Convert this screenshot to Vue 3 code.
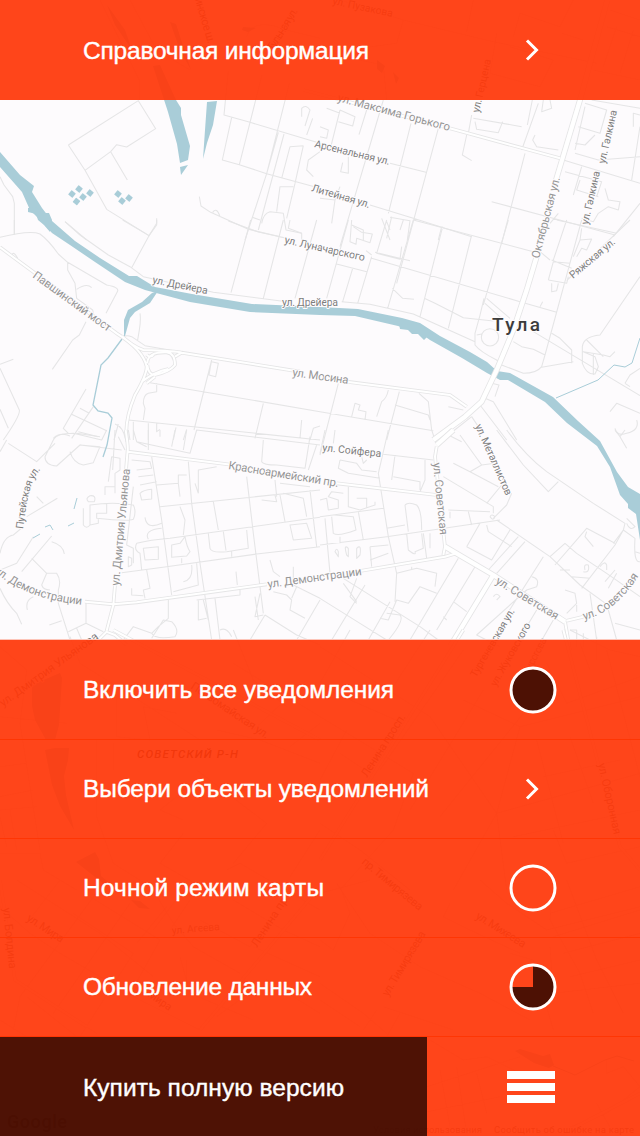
<script setup>
const rows = [
  { text: 'Включить все уведомления', icon: 'full', w: 311 },
  { text: 'Выбери объекты уведомлений', icon: 'chevron', w: 346 },
  { text: 'Ночной режим карты', icon: 'empty', w: 241 },
  { text: 'Обновление данных', icon: 'pie', w: 229 },
]

// Each tile is drawn at three units per pixel from its own origin.
const tiles = [
  {
    x: 0, y: 0,
    minor: 'M205 435L415 302L467 386L380 441L350 434L332 455L255 511M205 435L255 511L320 628L447 707L470 670V655M332 455L382 540M418 300V240L300 0M390 0L470 150L570 210M0 530L12 555L38 590L43 610V703M195 665L260 720M685 212L672 345L750 367L960 430M695 352L667 480L718 494L800 521L960 565M786 225L718 494M868 250L800 521L735 720M835 397L800 521M852 402L775 690M905 350V325Q918 312 930 330L915 378M938 355L920 405M870 440L910 437M870 440L845 535M960 455L925 480L920 510L940 530M910 437L885 550M598 590L603 618L632 637L745 688L860 715M638 637Q650 620 660 650M785 670Q790 640 810 635L850 640L858 690L905 700M757 652L780 660M830 635L840 560H880M885 550L860 655M740 110Q760 50 860 90L960 115M780 190L850 100',
    major: ''
  },
  {
    x: 320, y: 0,
    minor: 'M60 330L105 350L98 378L55 365M60 330L30 450M20 325L60 340M140 330L117 404M190 300L60 740M273 370L205 640M355 385L230 850M210 490L318 517M0 380L25 390L20 415L0 410M85 470V520L62 515L68 488M0 595L45 600L35 670M45 600L60 560M0 430L105 460M150 615L280 655L455 710M185 655L210 720M215 650L200 715M210 652L270 662L262 720M95 675L130 690V720M365 680L355 720M455 345L445 400M460 355L605 380M465 365L470 388L535 398L548 365M440 405L427 465L455 482M615 460L545 730M637 300L622 375M655 310L605 450M670 300L665 335L695 325L690 300M645 405L638 420L650 440L715 450M795 320L765 450M795 310L860 330L840 400L775 380M765 430L795 435L825 405M765 460L835 480L960 470M730 480L960 550M735 515L845 545L830 590M785 500L760 585M960 380L935 540M815 300L960 325M940 380V340L960 345M855 565L865 600L900 605L895 630L865 620L835 640L820 665L785 655M780 540L770 570L835 590M960 610L880 710M515 605L755 670L885 705M715 640L690 670M0 180L20 160L190 195L200 300M60 0L250 60L520 125L830 190M250 60L230 130L120 145M460 0L440 95M530 100L510 220L660 260L700 180L570 140M580 110L600 40L720 80L760 0M725 100L790 120M860 80L960 110M820 210L960 240M870 30L960 60M890 80L850 200M940 90L900 220',
    major: 'M-50 270L400 388L720 475', wide: 'M862 0L780 300L708 540'
  },
  {
    x: 0, y: 220,
    minor: 'M0 52Q90 30 120 42Q145 60 175 102L203 127L320 195Q360 202 352 215L318 280M203 127V150L225 190L230 235L278 270L283 292M230 208Q260 188 275 203M195 5L240 45L325 105L390 140L430 170L640 217L860 245M368 0L447 47L395 143M470 0V15L447 47M685 3L775 36L860 55M752 0L693 218M850 0L790 235M870 0L865 25L905 40V62M950 0L885 235M43 0V45M35 107Q40 90 53 115M258 305L238 345L218 360L157 448M0 433L40 418M0 445L58 570Q62 585 10 660M0 568L25 625M258 507L190 625L205 640M213 582L320 632M240 565L268 580M280 560L215 655M235 635L295 650M160 655Q180 635 210 648M420 280Q423 300 418 330L413 360M370 350Q380 345 395 350L435 377L478 385L550 397M478 385V400M635 420L627 465L647 470L655 430L635 425M635 420L582 630M450 488L960 575M470 490V515L445 520Q430 525 430 550L435 565L430 600M385 600L960 660M790 550L765 655M905 600L900 655M960 618L940 625L930 660M400 605V660M445 610V660M470 610V635L480 628M528 622L520 660M560 628L550 660M345 612Q370 620 377 660M355 612L342 660',
    major: 'M0 82L350 340Q430 390 440 440Q440 465 405 525Q370 610 382 665M365 348Q400 380 430 390Q530 393 545 398L900 455M440 404Q450 415 460 405M442 430Q442 395 500 397Q525 400 525 435Q510 455 465 465Q445 465 442 435M525 410L545 398M425 485Q465 455 505 447M440 490L465 470'
  },
  {
    x: 320, y: 220,
    minor: 'M85 0L20 235M50 132L140 155M98 145L68 245M155 110L113 250M95 0L90 65L108 73L110 55L150 68L157 42L125 37L100 20M200 0L170 100L240 118L245 80M240 30L250 0M210 30L200 5M155 115L600 245L710 277M280 0L203 265M368 20L300 290M455 45L385 325M565 0L500 220L490 255M280 0L640 95M138 92L155 105M165 97L270 122M217 205L248 235L282 238M313 235L345 250L395 275L430 293L520 303M65 245L150 253L280 282L380 327L465 365M492 235Q480 290 465 340V375Q480 395 530 420L545 435L610 460Q650 460 665 440L675 405L785 0M500 235L570 295M495 250L545 295M470 345L485 342M484 352A26 26 0 1 0 536 352A26 26 0 1 0 484 352M580 365L605 380L640 388L675 405M695 340L720 355L755 390V430M665 442L760 425M660 260L668 245M640 335L960 527M685 180L700 125L750 130M695 120L755 145M685 180L740 190L745 170M695 190V215L710 212L715 190M660 95L690 120M710 0L890 40M740 0L700 120M785 25L780 60L815 57L800 90L785 85L770 110M780 60L760 110M930 0L740 182M960 170L840 345Q790 350 787 380V430Q800 465 825 462L835 440L825 410L790 395L850 405L870 410L885 395M800 360L850 410M820 400V465M870 575L890 550L960 580M885 625Q890 650 920 640Q960 630 950 600M915 490L930 465L960 445M915 490L930 500M55 490L0 705M95 590L105 550L120 555L115 570L138 575L135 600M0 575L340 632M205 510Q200 535 185 545L170 590M238 515L200 660M225 555L325 585L330 600M297 520L325 545L335 630L345 660M385 560L430 570M515 490L537 495L525 530M480 555L560 660M495 535L520 545L590 660M455 590L385 645M455 590L475 620M385 645L425 665',
    major: 'M80 485L390 525L440 560', wide: 'M650 110L620 210L580 330L530 450L485 545L435 590L340 660'
  },
  {
    x: 0, y: 430,
    minor: 'M320 0L305 30L220 10Q170 10 160 30L135 80Q135 105 170 108L240 45L300 50L280 98L250 105Q220 100 210 65M230 10L300 20M0 65L20 30M25 40L110 95L165 40M240 45L365 60M345 0L338 120M355 20L375 60M385 0L390 30M400 0L410 35L440 50M445 0V60M410 35L570 70L590 0L960 45M480 0V20M525 0L515 50M560 0L550 60M790 30L785 95Q790 105 830 105L915 115L930 20M950 45L925 120M335 80L360 85V120L345 130V190M335 80L325 155M315 195V170H345M395 90L450 95L455 115L410 120M415 140L460 135M420 165L470 155M455 80L485 270L515 495M470 165L535 160V135L560 135M480 230L960 180M535 160L540 200M565 95L575 220L600 400L635 630M595 190L585 160M595 190V120L650 110M740 140L760 310L790 550M825 150L830 200M785 210L830 215L825 195M840 195L855 275M420 190Q430 180 455 178V207L425 210ZM640 215L655 300M410 340Q450 330 510 325L960 262M410 340Q400 360 420 370L425 420M430 355L475 350V388L435 390ZM515 345L540 340L555 320Q560 350 570 365L560 378L515 382ZM545 385V400M540 230L555 270L550 315M435 262Q440 300 485 280M485 295Q430 300 445 328M625 310L630 355Q635 370 680 365L745 355L740 300M670 305L678 362M695 362V380M365 428L500 410L770 372L960 350M440 420L450 475L430 480L435 505M395 475V495L430 497M575 405Q580 450 550 455M590 400L595 465L520 485M708 425L712 465M780 490L765 560L790 555M810 390L820 425L840 440M880 410V450M870 285L920 280L935 325L880 330ZM930 180L950 350M850 190L910 205L920 260M840 160L930 170M250 235V285Q260 298 270 285V225Q340 215 400 225Q410 245 400 268Q380 275 290 265V250H320V222M270 285L295 280V268M265 215Q255 205 270 197Q290 195 283 215ZM400 170L380 345L400 355V400M385 410V380L395 385V405ZM95 385L140 430H170Q185 450 175 480V520L210 630M140 430L125 465Q130 480 150 480M155 335Q190 345 193 372M155 318L65 425M0 370Q10 320 40 315L70 290M0 420L50 400L100 320M80 260L172 205M110 200L130 220M0 475Q20 520 50 550L65 583M82 540Q75 510 100 500M148 585L185 572M205 605L258 580V515M258 580L310 605M230 595L245 630M370 630L400 590L455 610M455 610L475 590L505 565V510M455 610Q465 630 525 620Q540 600 515 575L490 570L455 625M595 510V570L620 565M590 510L720 495V480M610 510L625 570M645 505L660 630M660 600Q680 590 695 620M765 500L775 570M795 555L890 615L960 645M795 555L750 630M820 485L860 495L875 510L870 540L915 565M880 465L960 505M890 470L875 505M960 510L890 630',
    major: 'M377 0Q385 50 383 65L700 105M383 60L378 120M345 465L340 525L320 602M255 515L340 523L410 517L800 463M320 605L295 630M318 605L345 615L380 645'
  },
  {
    x: 320, y: 430,
    minor: 'M15 0L0 70M45 0L40 40M205 0L175 130L205 320L230 430L225 515M190 73L340 90M225 75L215 150M60 90L55 115L85 130L180 145M60 90L110 100L125 120L170 125M315 90V150L300 185M125 80L130 100L140 90M220 140L300 155V180M0 210L20 205L25 240L55 235V210L25 200L35 185L70 190M85 170V230L120 240L165 225V215M110 205H140V235M0 260L190 235M15 265L30 430M0 345L200 320L540 270M115 245L130 330M35 260L40 310Q55 320 108 300L100 260L45 255M60 320V340M255 225Q265 215 290 225Q305 240 305 300M255 225L265 305M200 295L255 285M260 310L265 360Q290 380 285 365L310 355L305 310M310 310L320 385M330 310V355M150 350L205 345M150 350L155 410M150 390L205 370M45 365Q50 350 55 365V380ZM80 375Q70 340 85 355V380ZM110 385V355Q125 340 120 375ZM230 430L290 415L350 430L345 470M275 410V420M265 520L300 470L350 490M265 520L230 510L205 570L180 565M0 505L120 580L200 630M70 445L300 590L355 630M110 445L90 500L110 520M70 460L110 515M135 465L35 630M210 515L145 630M200 550L240 555Q255 570 205 630M415 385L270 630M465 410L350 600M400 515L440 545M370 560L380 570M440 350L515 390L570 300M440 350L480 280M500 285L505 305L575 350M530 270L690 380M595 320L505 420M615 335L530 430M370 140L520 230V250M400 100L450 125L535 170M545 165L500 220M420 15L485 105L450 125M485 105L525 100M575 190L560 225L520 265M385 240L510 245M390 245V265M445 245L455 285M510 260Q515 250 525 260Q520 275 510 260M530 0L610 105L685 185L715 155M560 0Q620 80 680 125L820 220L915 280L910 300L880 340M690 380L780 465L870 530M670 380L550 570M690 380L735 340L770 370L860 430L960 500M705 405L800 295L885 340M910 300L885 345L785 475M820 350L795 320L800 305M720 420H750M755 440L810 445M795 420Q790 400 805 405Q810 430 790 425M840 410Q855 390 860 405V420M885 420L855 455M890 430L865 475M735 480L765 490L770 520L740 550M770 525V545M810 490L830 630M620 480L650 470Q660 445 635 440M620 480L470 615L540 650M520 500Q530 485 540 500L530 510M650 540L590 640M700 570L660 640M865 540L890 630M885 580L960 600M910 300L945 325Q940 400 960 395M920 265L945 290Q930 305 920 280M945 365L960 370M885 0L900 20L915 0M900 20L920 55M750 600H770V650M790 610V650',
    major: 'M50 160L350 195M120 423L375 380L410 370M350 50L345 80L375 350L370 375M740 572L790 560M735 575L750 660', wide: 'M400 0L350 45M375 350L520 435L735 575M520 435L390 650'
  },
  {
    x: 0, y: 630,
    minor: 'M0 50L80 120L60 280L120 660M0 260L200 280M0 410L80 400M0 500L100 480M0 540L110 530M20 650L0 560M50 660L30 540M0 670H120L130 720L230 780M210 20L240 100L400 200L600 330M350 200V320L450 330L430 230L530 250M290 330L290 560L340 700L450 770M340 340V420M530 500L480 540L550 570M650 300L780 330L960 400M700 0L760 150L860 230M700 100L960 260M920 150L760 300M960 280L870 350M590 420L800 580L700 700M550 610L480 700L620 780M960 600L870 740M680 720L720 700L960 840',
    major: 'M340 0L960 330'
  },
  {
    x: 320, y: 630,
    minor: 'M0 50L330 260L530 550L600 290L960 200M0 170L250 280M90 0L0 160M330 0L200 200M430 60L180 420M490 180L270 540M600 290L430 210M610 250L360 560M530 550L400 780M530 550L560 780M0 260L280 430L220 600L60 780M80 300L0 450M60 370L150 430M530 550L960 430M650 330L730 640M750 320L820 520M670 440L900 390M580 620L960 540M700 600L740 700L960 650M750 0L870 60L960 80M780 40L810 120M830 20V90M680 100L740 220L960 140M860 60L960 440M0 580L120 660L270 780',
    major: 'M430 0L0 690M730 0L900 650L960 720'
  },
  {
    x: 0, y: 880,
    minor: 'M0 80L90 160L180 220L420 360L600 450M50 0L300 160L460 290M180 0L80 130M310 10L60 350L40 450M390 70L160 400M80 350L230 470M110 345L290 460M0 420L80 470M220 100L400 220L240 470M270 50L480 180L380 360M440 0L520 130L580 200L720 280M540 230L570 340L760 420M560 240V310M600 120L750 200L820 100M700 60L850 150L960 200M760 200L960 290M650 410L800 300L960 400M500 80L410 190M550 30L460 150M610 0L510 150',
    major: 'M960 20L600 450M0 0L45 300L260 440'
  },
  {
    x: 320, y: 880,
    minor: 'M0 40L150 0M0 180L40 210L90 100L60 20M50 10L150 160L300 260L480 340L630 420M390 70L370 110L450 150L600 220M480 0L560 70L680 150L960 80M700 0L690 120L780 280L820 400M740 0L830 240L910 400M690 100L960 20M700 170L960 90M730 220L960 160M750 290L960 240M640 240L700 450M690 200L700 340L960 310M570 220L640 240M0 310L130 400L200 460M0 360L120 440M170 390L130 450M190 380L400 450M240 400L200 470M330 480L430 540L500 530L600 580M360 570L390 740M410 560L440 760M320 620L600 530M300 700L540 650M470 580L500 700M830 670L880 760M960 620L860 700L700 760M860 540V580L910 560L960 620',
    major: 'M960 640L720 765'
  },
]

const labels = [
  ['ул. Максима Горького', 337, 101, 449, 131, 11.5, 'soft'], ['Арсенальная ул.', 314, 147, 389, 165, 10.5],
  ['Литейная ул.', 311, 191, 369, 208, 10.5], ['ул. Луначарского', 284, 243, 364, 261, 10.5],
  ['ул. Дрейера', 152, 283, 207, 294, 10.5], ['ул. Дрейера', 282, 306, 338, 306, 10.5],
  ['Павшинский мост', 32, 277, 108, 332, 11.5, 'soft'], ['ул. Мосина', 292, 376, 348, 384, 11.5, 'soft'],
  ['ул. Герцена', 479, 113, 491, 60, 10.5], ['ул. Галкина', 605, 164, 617, 111, 10.5],
  ['ул. Галкина', 588, 225, 600, 172, 10.5], ['Октябрьская ул.', 539, 259, 560, 178, 11.5, 'soft'],
  ['Ряжская ул.', 573, 279, 616, 243, 10.5], ['ул. Металлистов', 475, 426, 506, 496, 10.5],
  ['ул. Сойфера', 322, 451, 381, 457, 10.5], ['Красноармейский пр.', 228, 469, 338, 487, 11.5, 'soft'],
  ['ул. Советская', 433, 463, 440, 535, 11.5, 'soft'], ['ул. Дмитрия Ульянова', 119, 586, 130, 469, 11.5, 'soft'],
  ['ул. Демонстрации', 268, 588, 362, 575, 11.5, 'soft'], ['ул. Советская', 495, 583, 556, 620, 11.5, 'soft'],
  ['Тургеневская ул.', 476, 678, 515, 611, 10.5], ['ул. Жуковского', 496, 687, 531, 625, 10.5],
  ['Пирогова', 528, 676, 547, 640, 10.5, 'soft'], ['ул. Дмитрия Ульянова', 3, 707, 99, 638, 11.5],
  ['Первомайская ул.', 190, 688, 266, 739, 11.5], ['Ленина просп.', 367, 778, 406, 717, 11.5],
  ['ул. Оборонная', 598, 764, 614, 835, 11.5], ['пр. Тимирязева', 361, 863, 419, 911, 11.5],
  ['ул. Михеева', 475, 918, 523, 948, 11.5], ['ул. Тимирязева', 388, 997, 426, 934, 11.5],
  ['ул. Агеева', 172, 934, 220, 930, 10.5], ['Ленина пр', 257, 948, 288, 900, 11.5],
  ['ул. Мира', 26, 920, 61, 943, 11.5], ['Мира', 147, 996, 169, 1011, 10.5],
  ['ул. Болдина', 3, 908, 9, 969, 11.5], ['Минское ш.', 192, -10, 208, 44, 11.5],
  ['Тульная ул.', 273, 52, 298, 11, 11.5], ['ул. Пузакова', 332, 4, 392, 17, 10.5],
].map(([t, x1, y1, x2, y2, size, tone]) => ({
  t, size, tone,
  len: Math.hypot(x2 - x1, y2 - y1),
  tf: `translate(${x1} ${y1}) rotate(${(Math.atan2(y2 - y1, x2 - x1) * 180) / Math.PI})`,
}))

const ponds = [[72, 194], [79, 189], [90, 193], [83, 197], [76.5, 201.5], [118, 194], [129, 198], [122, 201]]
</script>

<template>
  <main class="screen">
    <svg class="map" viewBox="0 0 640 1136" aria-hidden="true">
      <rect width="640" height="1136" fill="#fdfbfd" />
      <g v-for="(t, i) in tiles" :key="'n' + i" :transform="`translate(${t.x} ${t.y}) scale(.33333)`" class="road">
        <path :d="t.minor" />
      </g>
      <g class="water">
        <path d="M0 152L20 175L34 186L32 192L42 208L52 221L75 241L100 258L129 276L137 276L155 287L192 294L252 304L320 307L358 309L402 318L420 323L440 336L470 352L487 362L497 371L510 373L553 397L578 421L600 441L617 472L628 487L640 494V540L636 514L628 508L628 504L620 495L610 467L597 446L567 423L545 402L508 380L500 380L487 373L462 358L430 340L420 333L398 326L355 316L320 315L250 312L190 302L145 290L125 282L95 262L70 245L52 233L38 218L30 210L22 192L0 167Z" />
        <path d="M28 208L35 207L42 213L49 213L52 220L50 232L44 225L38 220L36 214L28 212ZM399 324L410 325L415 322L423 326L433 335L431 339L427 337L424 340L418 334L412 334L408 330L400 329Z" />
        <path d="M158 291L150 303L135 312L130 318L125 336H124V320L128 310L142 302L152 293ZM153 66L160 65L176 100L181 108V115L190 146L188 160L180 163L177 144L168 112ZM180 167L188 165L181 175ZM207 102L217 101L213 125L207 143L203 159L205 130ZM107 5L125 30L132 50L115 25ZM170 22L176 24L191 70L180 50ZM243 27L256 28L248 32L242 30ZM377 60L385 66L382 73L377 69ZM393 72L399 78L396 84Z" />
        <path d="M32 685L60 673L62 678L59 725L55 740H46L35 720L32 706ZM45 750L55 748H69L68 760L64 776L66 795L74 830L60 806L52 785ZM76 862L95 852L99 859L101 876L112 885L104 884ZM131 900L140 901L150 909L139 908ZM515 1051L520 1049L543 1056L550 1054L554 1065L549 1068L534 1063Z" />
        <rect v-for="(p, i) in ponds" :key="i" x="-2.2" y="-2.2" width="4.4" height="4.4" :transform="`translate(${p[0]} ${p[1]}) rotate(40)`" stroke="#a9cdd8" stroke-width="1.2" stroke-linejoin="round" />
        <path class="stream" d="M122 339L108 358L101 365L93 405L98 411L108 413L112 418L107 445L103 457" stroke-width="1.3" />
        <path class="stream" d="M77 498L74 509M74 523L68 526M33 538L40 534M45 527L50 525L53 530M556 398L598 380L614 365L625 367L632 363L640 338M553 1066L575 1075L605 1060L617 1056L634 1061" />
      </g>
      <g v-for="(t, i) in tiles" :key="'m' + i" :transform="`translate(${t.x} ${t.y}) scale(.33333)`" class="road">
        <path :d="t.major" class="case" />
        <path v-if="t.wide" :d="t.wide" class="case-wide" />
        <path :d="t.major" class="core" />
        <path v-if="t.wide" :d="t.wide" class="core-wide" />
      </g>
      <path id="put" d="M23 529C26 510 28 482 41 469" fill="none" />
      <path id="dem" d="M-6 572C20 592 45 601 84 605" fill="none" />
      <path id="sov" d="M584 620Q615 613 640 574" fill="none" />
      <g class="names">
        <text v-for="(l, i) in labels" :key="i" :class="l.tone" :transform="l.tf" :font-size="l.size" :textLength="l.len">{{ l.t }}</text>
        <text font-size="10.5"><textPath href="#put" textLength="63">Путейская ул.</textPath></text>
        <text font-size="11.5" class="soft"><textPath href="#dem" textLength="95">ул. Демонстрации</textPath></text>
        <text font-size="11.5" class="soft"><textPath href="#sov" textLength="72">ул. Советская</textPath></text>
        <text x="137" y="758" font-size="11.5" font-weight="500" font-style="italic" textLength="101" class="city">СОВЕТСКИЙ Р-Н</text>
        <text x="492" y="331" font-size="19" font-weight="500" class="city" textLength="48">Тула</text>
        <text x="373" y="1133" font-size="9.5" textLength="109">Условия использования</text>
        <text x="494" y="1133" font-size="9.5" textLength="140">Сообщить об ошибке на карте</text>
        <text x="7" y="1128" font-size="18" font-weight="500" class="city" textLength="60">Google</text>
      </g>
    </svg>

    <div class="overlay">
      <header class="row head">
        <svg class="line" width="300" height="34"><text x="0" y="26" textLength="286">Справочная информация</text></svg>
        <svg class="icon" viewBox="0 0 48 48"><path d="M18 14.5L27.5 24L18 33.5" class="chev" /></svg>
      </header>
      <div class="window"></div>
      <section>
        <div v-for="r in rows" :key="r.text" class="row item">
          <svg class="line" width="360" height="34"><text x="0" y="25.3" :textLength="r.w">{{ r.text }}</text></svg>
          <svg class="icon" viewBox="0 0 48 48">
            <path v-if="r.icon === 'chevron'" d="M18 14.5L27.5 24L18 33.5" class="chev" />
            <template v-else>
              <circle v-if="r.icon === 'full'" cx="24" cy="24" r="21" fill="#4d1104" />
              <path v-if="r.icon === 'pie'" d="M24 24V3A21 21 0 1 1 3 24Z" fill="#4d1104" />
              <circle cx="24" cy="24" r="22" class="ring" />
            </template>
          </svg>
        </div>
      </section>
      <footer>
        <div class="buy"><svg class="line" width="300" height="34"><text x="0" y="25.5" textLength="261">Купить полную версию</text></svg></div>
        <div class="menu"><div class="burger"><i></i><i></i><i></i></div></div>
      </footer>
    </div>
  </main>
</template>

<style>
body { margin: 0; }
</style>

<style scoped>
.screen { position: relative; width: 640px; height: 1136px; overflow: hidden; }
.map { position: absolute; inset: 0; width: 640px; height: 1136px; }
.road path { fill: none; stroke: #e5e5e6; stroke-width: 3.2; stroke-linejoin: round; }
.road .case { stroke-width: 11; }
.road .case-wide { stroke-width: 18; }
.road .core { stroke: #fff; stroke-width: 6; }
.road .core-wide { stroke: #fff; stroke-width: 13; }
.water { fill: #a9cdd8; }
.stream { fill: none; stroke: #a9cdd8; }
.names { font-family: Roboto, "Noto Sans", sans-serif; fill: #7e7e7e; }
.names text { paint-order: stroke; stroke: #fdfbfd; stroke-width: 2px; stroke-linejoin: round; }
.names .soft { fill: #969696; }
.names .city { fill: #3c3c3c; }
.overlay { position: relative; display: flex; flex-direction: column; height: 1136px; }
.row { box-sizing: border-box; display: flex; align-items: center; justify-content: space-between; padding: 0 83px; background: rgba(255, 55, 9, .93); }
.head { height: 100px; }
.window { height: 539px; border-bottom: 1px solid #fdc5b9; }
.item { height: 99px; border-bottom: 1px solid #ff3604; }
.item:first-child { height: 100px; }
.line { display: block; overflow: visible; }
.line text { font: 24.5px "Liberation Sans", Arial, sans-serif; fill: #fff; stroke: #fff; stroke-width: .4px; }
.icon { width: 48px; height: 48px; flex: none; overflow: visible; }
.chev { fill: none; stroke: #fff; stroke-width: 3; }
.ring { fill: none; stroke: #fff; stroke-width: 3; }
footer { display: flex; height: 99px; }
.buy { box-sizing: border-box; display: flex; align-items: center; width: 426.5px; padding-left: 83px; background: rgba(75, 14, 1, .985); }
.menu { flex: 1; display: flex; align-items: center; box-sizing: border-box; padding-left: 80.6px; background: rgba(255, 55, 9, .93); }
.burger { display: grid; gap: 4px; width: 48px; }
.burger i { height: 8px; background: #fff; }
</style>
